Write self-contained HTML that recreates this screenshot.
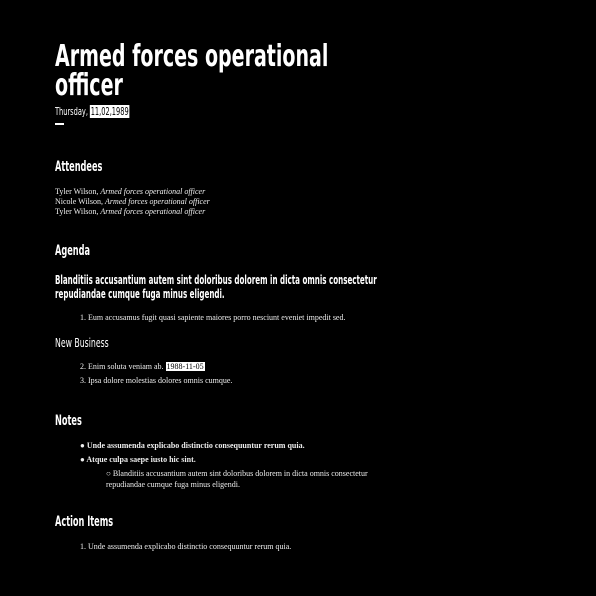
<!DOCTYPE html>
<html><head><meta charset="utf-8"><style>
html,body{margin:0;padding:0;background:#000;width:596px;height:596px;overflow:hidden;color:#fff}
div{position:absolute;white-space:nowrap}
.h{font-family:"DejaVu Sans Condensed","Liberation Sans",sans-serif;font-weight:bold;font-size:14px;line-height:14px;left:55px;transform-origin:0 0}
.s{font-family:"Liberation Serif",serif;font-size:8px;line-height:10px;color:#eee}
.hl{background:#fff;color:#000;padding:0 1px}
</style></head><body>
<div class="h" style="top:42px;font-size:30px;line-height:29px;transform:scaleX(0.705)">Armed forces operational<br>officer</div>
<div class="h" style="top:106px;font-size:11px;line-height:12px;font-weight:normal;transform:scaleX(0.67)">Thursday, <span class="hl">11,02,1989</span></div>
<div style="left:55px;top:123px;width:9px;height:2px;background:#fff"></div>
<div class="h" style="top:160px;transform:scaleX(0.65)">Attendees</div>
<div class="s" style="left:55px;top:187px">Tyler Wilson, <i>Armed forces operational officer</i><br>Nicole Wilson, <i>Armed forces operational officer</i><br>Tyler Wilson, <i>Armed forces operational officer</i></div>
<div class="h" style="top:244px;transform:scaleX(0.65)">Agenda</div>
<div class="h" style="top:273px;font-size:12px;line-height:14px;transform:scaleX(0.66)">Blanditiis accusantium autem sint doloribus dolorem in dicta omnis consectetur<br>repudiandae cumque fuga minus eligendi.</div>
<div class="s" style="left:80px;top:313px">1. Eum accusamus fugit quasi sapiente maiores porro nesciunt eveniet impedit sed.</div>
<div class="h" style="top:336px;font-size:12px;font-weight:normal;transform:scaleX(0.72)">New Business</div>
<div class="s" style="left:80px;top:362px">2. Enim soluta veniam ab. <span class="hl">1988-11-05</span></div>
<div class="s" style="left:80px;top:376px">3. Ipsa dolore molestias dolores omnis cumque.</div>
<div class="h" style="top:414px;transform:scaleX(0.65)">Notes</div>
<div class="s" style="left:80px;top:441px;font-weight:bold">● Unde assumenda explicabo distinctio consequuntur rerum quia.</div>
<div class="s" style="left:80px;top:455px;font-weight:bold">● Atque culpa saepe iusto hic sint.</div>
<div class="s" style="left:106px;top:468px;line-height:11px">○ Blanditiis accusantium autem sint doloribus dolorem in dicta omnis consectetur<br>repudiandae cumque fuga minus eligendi.</div>
<div class="h" style="top:515px;transform:scaleX(0.65)">Action Items</div>
<div class="s" style="left:80px;top:542px">1. Unde assumenda explicabo distinctio consequuntur rerum quia.</div>
</body></html>
